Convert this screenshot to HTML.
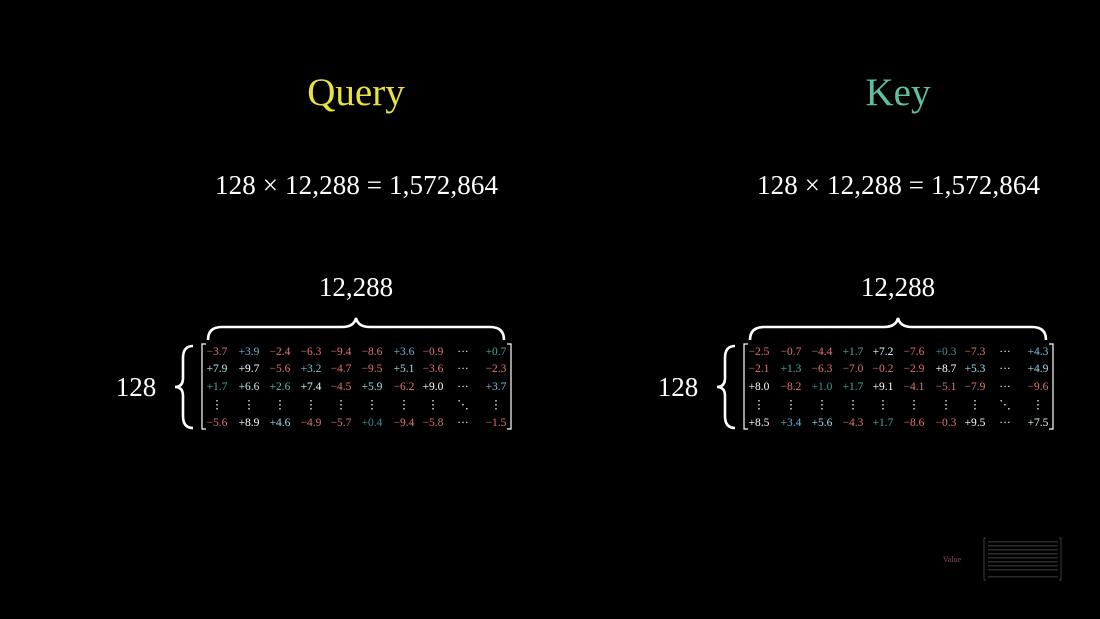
<!DOCTYPE html><html><head><style>body{margin:0;background:#000}svg{display:block}text{font-family:"Liberation Serif",serif}</style></head><body>
<svg width="1100" height="619" viewBox="0 0 1100 619" xmlns="http://www.w3.org/2000/svg">
<rect width="1100" height="619" fill="#000"/>
<g id="L">
<text x="356" y="105" font-size="39" fill="#e8e23c" text-anchor="middle">Query</text>
<text x="215" y="194" font-size="27" fill="#fff" textLength="283" lengthAdjust="spacing">128 × 12,288 = 1,572,864</text>
<text x="356" y="296" font-size="27" fill="#fff" text-anchor="middle">12,288</text>
<path d="M208 340 Q208 327 222 327 L342 327 Q354 327 356 318 Q358 327 370 327 L490 327 Q504 327 504 340" fill="none" stroke="#fff" stroke-width="2.6"/>
<text x="136" y="396" font-size="27" fill="#fff" text-anchor="middle">128</text>
<path d="M193 346 Q183 346 183 358 L183 378 Q183 387 175 387 Q183 387 183 396 L183 416 Q183 428 193 428" fill="none" stroke="#fff" stroke-width="2.6"/>
<path d="M206 344 L202 344 L202 429 L206 429 M507 344 L511 344 L511 429 L507 429" fill="none" stroke="#fff" stroke-width="1.2"/>
<g font-size="11.5" text-anchor="middle">
<text y="355"><tspan x="217" fill="#e07474">−3.7</tspan><tspan x="249" fill="#6ab6d8">+3.9</tspan><tspan x="280" fill="#e07474">−2.4</tspan><tspan x="311" fill="#e07474">−6.3</tspan><tspan x="341" fill="#e07474">−9.4</tspan><tspan x="372" fill="#e07474">−8.6</tspan><tspan x="404" fill="#6ab6d8">+3.6</tspan><tspan x="433" fill="#e07474">−0.9</tspan><tspan x="463" fill="#fff">···</tspan><tspan x="496" fill="#4fa8a0">+0.7</tspan></text>
<text y="372"><tspan x="217" fill="#bfe6d8">+7.9</tspan><tspan x="249" fill="#fff">+9.7</tspan><tspan x="280" fill="#e07474">−5.6</tspan><tspan x="311" fill="#7ac0c8">+3.2</tspan><tspan x="341" fill="#e07474">−4.7</tspan><tspan x="372" fill="#e07474">−9.5</tspan><tspan x="404" fill="#a8d8e8">+5.1</tspan><tspan x="433" fill="#e07474">−3.6</tspan><tspan x="463" fill="#fff">···</tspan><tspan x="496" fill="#e07474">−2.3</tspan></text>
<text y="390"><tspan x="217" fill="#4fa8a0">+1.7</tspan><tspan x="249" fill="#bfe6e8">+6.6</tspan><tspan x="280" fill="#6ab6b8">+2.6</tspan><tspan x="311" fill="#dff">+7.4</tspan><tspan x="341" fill="#e07474">−4.5</tspan><tspan x="372" fill="#a8d8e8">+5.9</tspan><tspan x="404" fill="#e07474">−6.2</tspan><tspan x="433" fill="#fff">+9.0</tspan><tspan x="463" fill="#fff">···</tspan><tspan x="496" fill="#7ac0d8">+3.7</tspan></text>
<text y="408" fill="#fff"><tspan x="217">⋮</tspan><tspan x="249">⋮</tspan><tspan x="280">⋮</tspan><tspan x="311">⋮</tspan><tspan x="341">⋮</tspan><tspan x="372">⋮</tspan><tspan x="404">⋮</tspan><tspan x="433">⋮</tspan><tspan x="463">⋱</tspan><tspan x="496">⋮</tspan></text>
<text y="426"><tspan x="217" fill="#e07474">−5.6</tspan><tspan x="249" fill="#fff">+8.9</tspan><tspan x="280" fill="#a8d8e8">+4.6</tspan><tspan x="311" fill="#e07474">−4.9</tspan><tspan x="341" fill="#e07474">−5.7</tspan><tspan x="372" fill="#3f8f98">+0.4</tspan><tspan x="404" fill="#e07474">−9.4</tspan><tspan x="433" fill="#e07474">−5.8</tspan><tspan x="463" fill="#fff">···</tspan><tspan x="496" fill="#e07474">−1.5</tspan></text>
</g></g>
<g transform="translate(542,0)">
<text x="356" y="105" font-size="39" fill="#5ec0a2" text-anchor="middle">Key</text>
<text x="215" y="194" font-size="27" fill="#fff" textLength="283" lengthAdjust="spacing">128 × 12,288 = 1,572,864</text>
<text x="356" y="296" font-size="27" fill="#fff" text-anchor="middle">12,288</text>
<path d="M208 340 Q208 327 222 327 L342 327 Q354 327 356 318 Q358 327 370 327 L490 327 Q504 327 504 340" fill="none" stroke="#fff" stroke-width="2.6"/>
<text x="136" y="396" font-size="27" fill="#fff" text-anchor="middle">128</text>
<path d="M193 346 Q183 346 183 358 L183 378 Q183 387 175 387 Q183 387 183 396 L183 416 Q183 428 193 428" fill="none" stroke="#fff" stroke-width="2.6"/>
<path d="M206 344 L202 344 L202 429 L206 429 M507 344 L511 344 L511 429 L507 429" fill="none" stroke="#fff" stroke-width="1.2"/>
<g font-size="11.5" text-anchor="middle">
<text y="355"><tspan x="217" fill="#e07474">−2.5</tspan><tspan x="249" fill="#e07474">−0.7</tspan><tspan x="280" fill="#e07474">−4.4</tspan><tspan x="311" fill="#4fa8a0">+1.7</tspan><tspan x="341" fill="#dff">+7.2</tspan><tspan x="372" fill="#e07474">−7.6</tspan><tspan x="404" fill="#3f8f98">+0.3</tspan><tspan x="433" fill="#e07474">−7.3</tspan><tspan x="463" fill="#fff">···</tspan><tspan x="496" fill="#7ac0d8">+4.3</tspan></text>
<text y="372"><tspan x="217" fill="#e07474">−2.1</tspan><tspan x="249" fill="#4fa8a0">+1.3</tspan><tspan x="280" fill="#e07474">−6.3</tspan><tspan x="311" fill="#e07474">−7.0</tspan><tspan x="341" fill="#e07474">−0.2</tspan><tspan x="372" fill="#e07474">−2.9</tspan><tspan x="404" fill="#fff">+8.7</tspan><tspan x="433" fill="#a8d8e8">+5.3</tspan><tspan x="463" fill="#fff">···</tspan><tspan x="496" fill="#a8d8e8">+4.9</tspan></text>
<text y="390"><tspan x="217" fill="#fff">+8.0</tspan><tspan x="249" fill="#e07474">−8.2</tspan><tspan x="280" fill="#3f8f98">+1.0</tspan><tspan x="311" fill="#4fa8a0">+1.7</tspan><tspan x="341" fill="#fff">+9.1</tspan><tspan x="372" fill="#e07474">−4.1</tspan><tspan x="404" fill="#e07474">−5.1</tspan><tspan x="433" fill="#e07474">−7.9</tspan><tspan x="463" fill="#fff">···</tspan><tspan x="496" fill="#e07474">−9.6</tspan></text>
<text y="408" fill="#fff"><tspan x="217">⋮</tspan><tspan x="249">⋮</tspan><tspan x="280">⋮</tspan><tspan x="311">⋮</tspan><tspan x="341">⋮</tspan><tspan x="372">⋮</tspan><tspan x="404">⋮</tspan><tspan x="433">⋮</tspan><tspan x="463">⋱</tspan><tspan x="496">⋮</tspan></text>
<text y="426"><tspan x="217" fill="#fff">+8.5</tspan><tspan x="249" fill="#6ab6d8">+3.4</tspan><tspan x="280" fill="#a8d8e8">+5.6</tspan><tspan x="311" fill="#e07474">−4.3</tspan><tspan x="341" fill="#4fa8a0">+1.7</tspan><tspan x="372" fill="#e07474">−8.6</tspan><tspan x="404" fill="#e07474">−0.3</tspan><tspan x="433" fill="#fff">+9.5</tspan><tspan x="463" fill="#fff">···</tspan><tspan x="496" fill="#dff">+7.5</tspan></text>
</g></g>
<text x="952" y="562" font-size="8" fill="#8a4a50" text-anchor="middle">Value</text>
<path d="M986 538 L984 538 L984 580 L986 580 M1059 538 L1061 538 L1061 580 L1059 580" fill="none" stroke="#555" stroke-width="0.7"/>
<g fill="#2a2a2a"><rect x="988" y="541" width="70" height="1.5"/><rect x="988" y="545" width="70" height="1.5"/><rect x="988" y="549" width="70" height="1.5"/><rect x="988" y="553" width="70" height="1.5"/><rect x="988" y="557" width="70" height="1.5"/><rect x="988" y="561" width="70" height="1.5"/><rect x="988" y="565" width="70" height="1.5"/><rect x="988" y="569" width="70" height="1.5"/><rect x="988" y="576" width="70" height="1.5"/></g>
</svg></body></html>
